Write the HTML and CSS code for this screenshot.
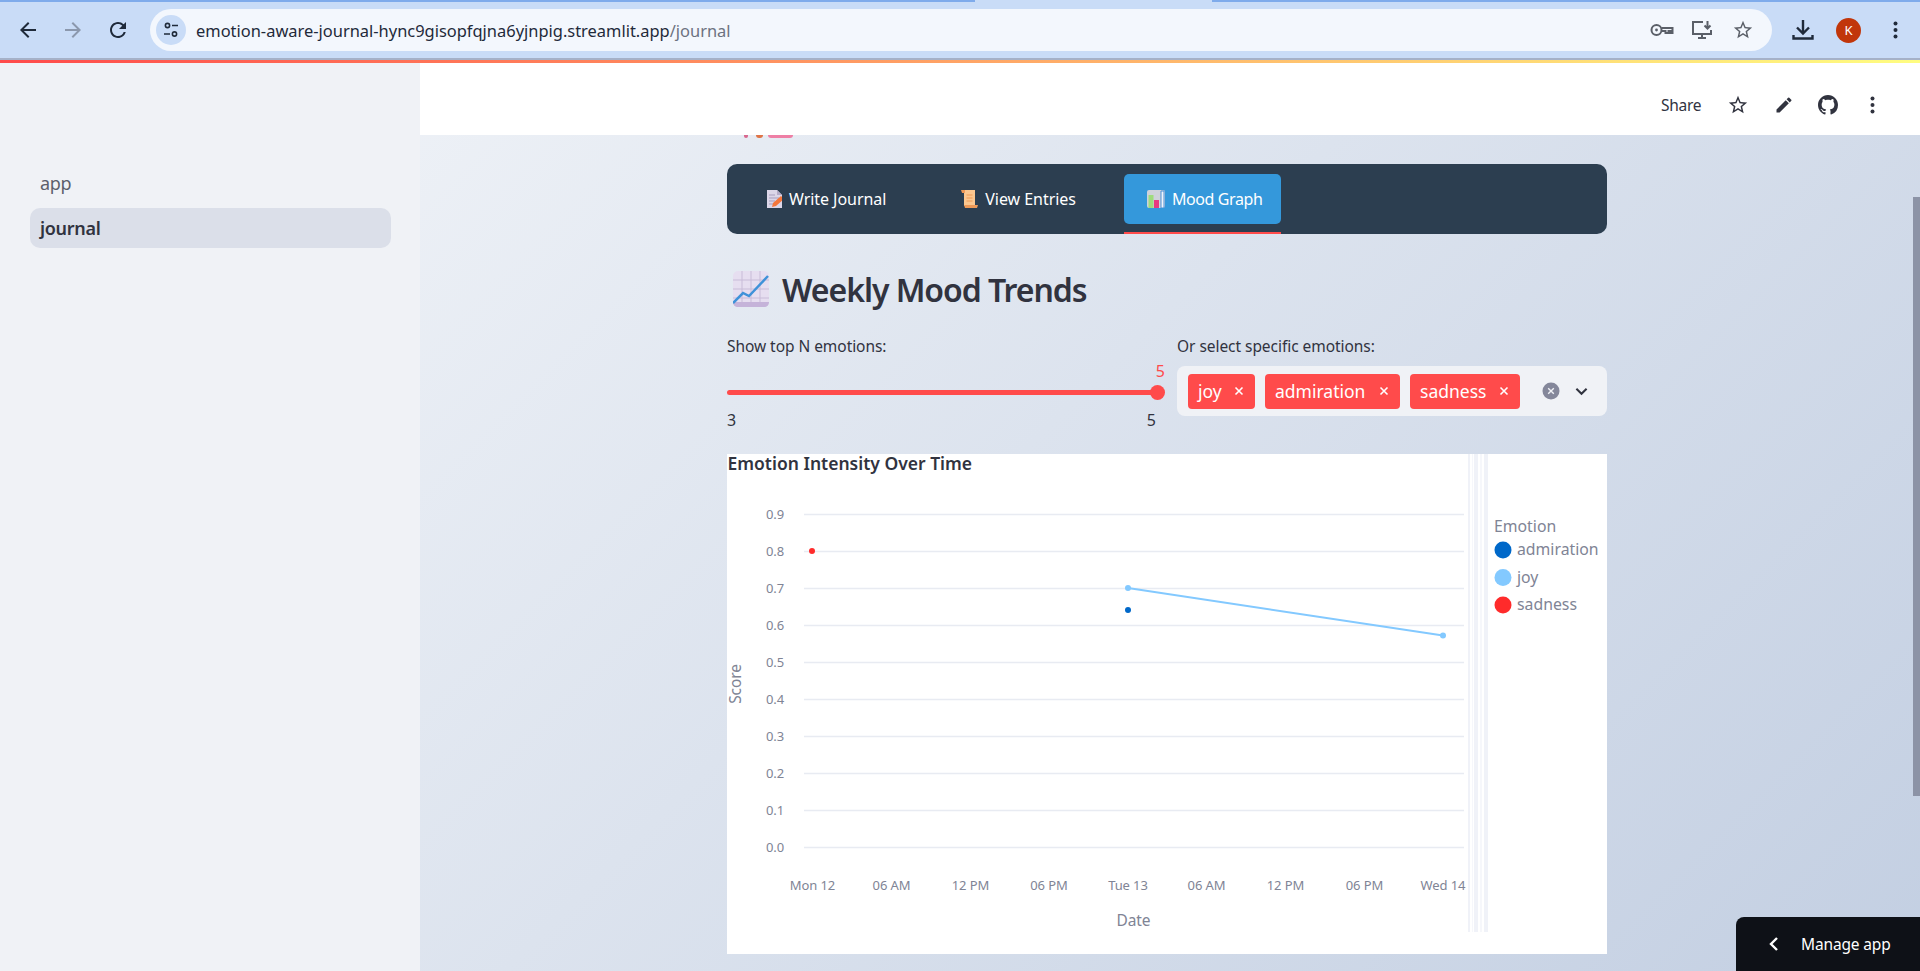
FILE: index.html
```html
<!DOCTYPE html>
<html lang="en">
<head>
    <meta charset="UTF-8">
    <title>journal</title>
    <link rel="stylesheet" href="styles.css">
</head>
<body>

    <!-- Browser toolbar -->
    <div class="chrome">
        <div class="tabEdge"><span class="edgeLeft"></span><span class="edgeGap"></span><span class="edgeRight"></span></div>
        <div class="toolbar">
            <svg class="navIcon" viewBox="0 0 24 24"><path d="M20 11H7.83l5.59-5.59L12 4l-8 8 8 8 1.41-1.41L7.83 13H20v-2z"/></svg>
            <svg class="navIcon navOff" viewBox="0 0 24 24"><path d="M12 4l-1.41 1.41L16.17 11H4v2h12.17l-5.58 5.59L12 20l8-8z"/></svg>
            <svg class="navIcon" viewBox="0 0 24 24"><path d="M17.65 6.35A7.958 7.958 0 0 0 12 4c-4.42 0-7.99 3.58-7.99 8s3.57 8 7.99 8c3.73 0 6.84-2.55 7.73-6h-2.08A5.99 5.99 0 0 1 12 18c-3.31 0-6-2.69-6-6s2.69-6 6-6c1.66 0 3.14.69 4.22 1.78L13 11h7V4l-2.35 2.35z"/></svg>
            <div class="urlPill">
                <span class="siteBadge">
                    <svg viewBox="0 0 16 16" class="tuneIcon"><circle cx="4.5" cy="3.5" r="2.1"/><path d="M9 3.5h6M1 12h6"/><circle cx="11.5" cy="12" r="2.1"/></svg>
                </span>
                <span class="url">emotion-aware-journal-hync9gisopfqjna6yjnpig.streamlit.app<span class="urlPath">/journal</span></span>
                <svg class="pillIcon keyIcon" viewBox="0 0 24 14"><circle cx="6.5" cy="7" r="5"/><circle cx="6.5" cy="7" r="1.4" class="solid"/><path d="M11.5 5h11v5h-2v-2h-2v2h-3V8h-4"/></svg>
                <svg class="pillIcon screenIcon" viewBox="0 0 22 22"><path d="M12 3H2v12h18v-4M7 19h8M11 15v4"/><path d="M16.5 2v7M13.5 6.5l3 3 3-3"/></svg>
                <svg class="pillIcon starIcon" viewBox="0 0 24 24"><path d="M22 9.24l-7.19-.62L12 2 9.19 8.63 2 9.24l5.46 4.73L5.82 21 12 17.27 18.18 21l-1.63-7.03L22 9.24zM12 15.4l-3.76 2.27 1-4.28-3.32-2.88 4.38-.38L12 6.1l1.71 4.04 4.38.38-3.32 2.88 1 4.28L12 15.4z"/></svg>
            </div>
            <svg class="downloadIcon" viewBox="0 0 22 22"><path d="M11 1v13M5 8.5l6 6 6-6M1.500 16v3.500h19V16"/></svg>
            <span class="avatar">K</span>
            <svg class="chromeKebab" viewBox="0 0 4 18"><circle cx="2" cy="2.500" r="2"/><circle cx="2" cy="9" r="2"/><circle cx="2" cy="15.500" r="2"/></svg>
        </div>
    </div>

    <div class="app">
        <div class="decoration"></div>

        <!-- Sidebar -->
        <nav class="sidebar">
            <a class="navLink">app</a>
            <a class="navLink navActive">journal</a>
        </nav>

        <div class="main">
            <!-- Header -->
            <header class="header">
                <span class="share">Share</span>
                <svg class="headIcon starHead" viewBox="0 0 24 24"><path d="M22 9.24l-7.19-.62L12 2 9.19 8.63 2 9.24l5.46 4.73L5.82 21 12 17.27 18.18 21l-1.63-7.03L22 9.24zM12 15.4l-3.76 2.27 1-4.28-3.32-2.88 4.38-.38L12 6.1l1.71 4.04 4.38.38-3.32 2.88 1 4.28L12 15.4z"/></svg>
                <svg class="headIcon penHead" viewBox="0 0 24 24"><path d="M3 17.25V21h3.75L17.81 9.94l-3.75-3.75L3 17.25zM20.71 7.04a1 1 0 0 0 0-1.41l-2.34-2.34a1 1 0 0 0-1.41 0l-1.83 1.83 3.75 3.75 1.83-1.83z"/></svg>
                <svg class="headIcon gitHead" viewBox="0 0 16 16"><path d="M8 0C3.58 0 0 3.58 0 8c0 3.54 2.29 6.53 5.47 7.59.4.07.55-.17.55-.38 0-.19-.01-.82-.01-1.49-2.01.37-2.53-.49-2.69-.94-.09-.23-.48-.94-.82-1.13-.28-.15-.68-.52-.01-.53.63-.01 1.08.58 1.23.82.72 1.21 1.87.87 2.33.66.07-.52.28-.87.51-1.07-1.78-.2-3.64-.89-3.64-3.95 0-.87.31-1.59.82-2.15-.08-.2-.36-1.02.08-2.12 0 0 .67-.21 2.2.82.64-.18 1.32-.27 2-.27.68 0 1.36.09 2 .27 1.53-1.04 2.2-.82 2.2-.82.44 1.1.16 1.92.08 2.12.51.56.82 1.27.82 2.15 0 3.07-1.87 3.75-3.65 3.95.29.25.54.73.54 1.48 0 1.07-.01 1.93-.01 2.2 0 .21.15.46.55.38A8.013 8.013 0 0 0 16 8c0-4.42-3.58-8-8-8z"/></svg>
                <svg class="headKebab" viewBox="0 0 4 18"><circle cx="2" cy="2.500" r="2"/><circle cx="2" cy="9" r="2"/><circle cx="2" cy="15.500" r="2"/></svg>
            </header>

            <div class="content">
                <!-- Bottom edge of the title emoji, scrolled under the header -->
                <div class="titleSliver"><span class="sliverA"></span><span class="sliverB"></span><span class="sliverC"></span></div>

                <!-- Tabs -->
                <div class="tabBar">
                    <div class="tab tabWrite">
                        <svg class="tabIcon" viewBox="0 0 15 18"><path class="pageFill" d="M0 0h10l5 5v13H0z"/><path class="pageFold" d="M10 0l5 5h-5z"/><path class="pageLine" d="M2 5h6M2 8h10M2 11h6M2 14h4"/><path class="pencil" d="M5 17l1-4 8-7 3 3-8 7z"/></svg>
                        <span>Write Journal</span>
                    </div>
                    <div class="tab tabView">
                        <svg class="tabIcon scrollIcon" viewBox="0 0 17 18"><path class="scrollFill" d="M3 0h11v16H3z"/><path class="scrollEnd" d="M0 0h4v3H1zM3 15h14l-1 3H4z"/><path class="scrollLine" d="M5.500 5h6M5.500 8h6M5.500 11h6"/></svg>
                        <span>View Entries</span>
                    </div>
                    <div class="tab tabMood">
                        <svg class="tabIcon chartIcon" viewBox="0 0 18 18"><rect class="boardFill" width="18" height="18" rx="2"/><rect class="barGreen" x="1.500" y="5" width="5" height="13"/><rect class="barPink" x="7" y="10" width="5" height="8"/><path class="barBlue" d="M14 1h3v17h-3z"/></svg>
                        <span>Mood Graph</span>
                    </div>
                </div>

                <h2 class="title">
                    <svg class="titleIcon" viewBox="0 0 36 36">
                        <rect class="gridFill" width="36" height="36" rx="5"/>
                        <path class="gridLine" d="M9 0v36M18 0v36M27 0v36M0 9h36M0 18h36M0 27h36"/>
                        <path class="gridBase" d="M0 31c0 3 2 5 5 5h26c3 0 5-2 5-5z"/>
                        <path class="gridTrend" d="M0 32l10-10 6 3L35 5"/>
                    </svg>
                    Weekly Mood Trends
                </h2>

                <!-- Filters -->
                <div class="controls">
                    <div class="control">
                        <label class="fieldLabel">Show top N emotions:</label>
                        <div class="slider">
                            <span class="sliderValue">5</span>
                            <div class="track"><span class="thumb"></span></div>
                            <div class="ticks"><span>3</span><span>5</span></div>
                        </div>
                    </div>
                    <div class="control">
                        <label class="fieldLabel">Or select specific emotions:</label>
                        <div class="multi">
                            <span class="tag tagJoy">joy <svg class="tagX" viewBox="0 0 10 10"><path d="M1.500 1.500l7 7M8.500 1.500l-7 7"/></svg></span>
                            <span class="tag tagAdm">admiration <svg class="tagX" viewBox="0 0 10 10"><path d="M1.500 1.500l7 7M8.500 1.500l-7 7"/></svg></span>
                            <span class="tag tagSad">sadness <svg class="tagX" viewBox="0 0 10 10"><path d="M1.500 1.500l7 7M8.500 1.500l-7 7"/></svg></span>
                            <svg class="clearAll" viewBox="0 0 18 18"><circle cx="9" cy="9" r="8.500"/><path d="M6.200 6.200l5.600 5.600M11.800 6.200l-5.600 5.600"/></svg>
                            <svg class="chevron" viewBox="0 0 14 9"><path d="M1.500 1.500L7 7l5.500-5.500"/></svg>
                        </div>
                    </div>
                </div>

                <!-- Chart -->
                <div class="chartCard">
                    <svg class="chart" viewBox="727 454 880 500">
                        <text x="727.500" y="470" class="chartTitle">Emotion Intensity Over Time</text>

                        <g class="stripes">
                            <rect x="1468" y="454" width="2" height="478"/>
                            <rect x="1472" y="454" width="1" height="478" class="stripeSoft"/>
                            <rect x="1474" y="454" width="4" height="478"/>
                            <rect x="1480" y="454" width="2" height="478" class="stripeSoft"/>
                            <rect x="1484" y="454" width="4" height="478"/>
                        </g>

                        <g class="gridY">
                            <path d="M804 514.500H1464M804 551.500H1464M804 588.500H1464M804 625.500H1464M804 662.500H1464M804 699.500H1464M804 736.500H1464M804 773.500H1464M804 810.500H1464M804 847.500H1464"/>
                        </g>

                        <g class="axisY">
                            <text x="784" y="519">0.9</text>
                            <text x="784" y="556">0.8</text>
                            <text x="784" y="593">0.7</text>
                            <text x="784" y="630">0.6</text>
                            <text x="784" y="667">0.5</text>
                            <text x="784" y="704">0.4</text>
                            <text x="784" y="741">0.3</text>
                            <text x="784" y="778">0.2</text>
                            <text x="784" y="815">0.1</text>
                            <text x="784" y="852">0.0</text>
                        </g>

                        <g class="axisX">
                            <text x="812.500" y="890">Mon 12</text>
                            <text x="891.500" y="890">06 AM</text>
                            <text x="970.500" y="890">12 PM</text>
                            <text x="1049" y="890">06 PM</text>
                            <text x="1128" y="890">Tue 13</text>
                            <text x="1206.500" y="890">06 AM</text>
                            <text x="1285.500" y="890">12 PM</text>
                            <text x="1364.500" y="890">06 PM</text>
                            <text x="1443" y="890">Wed 14</text>
                        </g>

                        <text x="1133.500" y="926" class="axisName">Date</text>
                        <text transform="translate(741 684) rotate(-90)" class="axisName">Score</text>

                        <path class="joyLine" d="M1128 588L1443 635.500"/>
                        <circle class="dotJoy" cx="1128" cy="588" r="3"/>
                        <circle class="dotJoy" cx="1443" cy="635.500" r="3"/>
                        <circle class="dotAdm" cx="1128" cy="610" r="3"/>
                        <circle class="dotSad" cx="812" cy="551" r="3"/>

                        <text x="1494" y="532" class="legendName">Emotion</text>
                        <circle class="dotAdm" cx="1503" cy="550" r="8.500"/>
                        <text x="1517" y="555" class="legendName">admiration</text>
                        <circle class="dotJoy" cx="1503" cy="577.500" r="8.500"/>
                        <text x="1517" y="583" class="legendName">joy</text>
                        <circle class="dotSad" cx="1503" cy="605" r="8.500"/>
                        <text x="1517" y="610" class="legendName">sadness</text>
                    </svg>
                </div>
            </div>
        </div>

        <span class="scrollThumb"></span>

        <div class="manageApp">
            <svg class="manageChevron" viewBox="0 0 10 16"><path d="M8 2L2 8l6 6"/></svg>
            Manage app
        </div>
    </div>

</body>
</html>
```

FILE: styles.css
```css
* {
    margin: 0;
    padding: 0;
    box-sizing: border-box;
}

html, body {
    height: 100%;
    overflow: hidden;
}

body {
    font-family: "Noto Sans", sans-serif;
    color: #31333f;
}

/* Browser toolbar */
.chrome {
    height: 60px;
    background-color: #c9dcf7;
    border-bottom: 2px solid #a5b1c8;
}

.tabEdge {
    display: flex;
    height: 2px;
}

.edgeLeft {
    width: 975px;
    background-color: #7fabeb;
}

.edgeGap {
    width: 237px;
}

.edgeRight {
    flex: 1;
    background-color: #7fabeb;
}

.toolbar {
    display: flex;
    align-items: center;
    height: 56px;
    padding-left: 16px;
}

.navIcon {
    width: 24px;
    height: 24px;
    margin-right: 21px;
    fill: #1f2a3a;
}

.navOff {
    fill: #8b98ad;
}

.urlPill {
    display: flex;
    align-items: center;
    width: 1622px;
    height: 42px;
    margin-left: -1px;
    padding-left: 6px;
    background-color: #f3f7fd;
    border-radius: 21px;
}

.siteBadge {
    display: flex;
    align-items: center;
    justify-content: center;
    width: 30px;
    height: 30px;
    border-radius: 50%;
    background-color: #c9dcf7;
}

.tuneIcon {
    width: 16px;
    height: 16px;
    fill: none;
    stroke: #1f2a3a;
    stroke-width: 1.6;
}

.url {
    flex: 1;
    margin-left: 10px;
    font-size: 16.450px;
    color: #1f2a3a;
}

.urlPath {
    color: #6c7280;
}

.pillIcon {
    fill: none;
    stroke: #5a5f68;
    stroke-width: 2;
}

.keyIcon {
    width: 24px;
    height: 14px;
    margin-right: 17px;
}

.keyIcon .solid {
    fill: #5a5f68;
    stroke: none;
}

.screenIcon {
    width: 22px;
    height: 22px;
    margin-right: 19px;
}

.starIcon {
    width: 22px;
    height: 22px;
    margin-right: 18px;
    fill: #5a5f68;
    stroke: none;
}

.downloadIcon {
    width: 22px;
    height: 22px;
    margin-left: 20px;
    fill: none;
    stroke: #1f2a3a;
    stroke-width: 2.400;
}

.avatar {
    display: flex;
    align-items: center;
    justify-content: center;
    width: 25px;
    height: 25px;
    margin-left: 22px;
    border-radius: 50%;
    background-color: #c1360a;
    color: #fff;
    font-size: 13px;
}

.chromeKebab {
    width: 5px;
    height: 18px;
    margin-left: 32px;
    fill: #1f2a3a;
}

/* App */
.app {
    position: relative;
    display: flex;
    height: 911px;
    background: linear-gradient(135deg, #f5f7fa 0%, #c3cfe2 100%);
    overflow: hidden;
}

.decoration {
    position: absolute;
    top: 0;
    left: 0;
    right: 0;
    height: 3px;
    background-image: linear-gradient(90deg, #ff4b4b, #fffd80);
}

.sidebar {
    width: 420px;
    flex-shrink: 0;
    padding: 103px 29px 0 30px;
    background-color: #f0f2f6;
}

.navLink {
    display: flex;
    align-items: center;
    height: 40px;
    margin-bottom: 5px;
    padding-left: 10px;
    border-radius: 10px;
    font-size: 18px;
    letter-spacing: -0.3px;
    color: #5c5f6c;
}

.navActive {
    background-color: #dbdfe9;
    font-weight: 600;
    color: #31333f;
}

.main {
    flex: 1;
    min-width: 0;
}

.header {
    display: flex;
    align-items: center;
    height: 75px;
    padding-top: 15px;
    padding-left: 1241px;
    background-color: #fff;
}

.share {
    width: 41px;
    font-size: 15.500px;
    letter-spacing: -0.3px;
    color: #31333f;
}

.headIcon {
    fill: #31333f;
}

.starHead {
    width: 22px;
    height: 22px;
    margin-left: 25px;
}

.penHead {
    width: 20px;
    height: 20px;
    margin-left: 25px;
}

.gitHead {
    width: 20px;
    height: 20px;
    margin-left: 24px;
}

.headKebab {
    width: 5px;
    height: 18px;
    margin-left: 32px;
    fill: #31333f;
}

.content {
    width: 880px;
    margin-left: 307px;
}

.titleSliver {
    display: flex;
    height: 3px;
}

.titleSliver span {
    height: 3px;
    border-radius: 0 0 4px 4px;
}

.sliverA {
    width: 4px;
    margin-left: 17px;
    background-color: #d8688e;
}

.sliverB {
    width: 7px;
    margin-left: 8px;
    background-color: #df7447;
}

.sliverC {
    width: 25px;
    margin-left: 5px;
    background-color: #ee7fa5;
}

/* Tabs */
.tabBar {
    display: flex;
    height: 70px;
    margin-top: 26px;
    background-color: #2c3e50;
    border-radius: 10px;
    color: #fff;
    font-size: 16px;
    letter-spacing: -0.05px;
}

.tab {
    display: flex;
    align-items: center;
    gap: 7px;
    height: 50px;
    margin-top: 10px;
}

.tabWrite {
    margin-left: 40px;
}

.tabView {
    margin-left: 75px;
}

.tabMood {
    position: relative;
    width: 157px;
    margin-left: 48px;
    padding-left: 23px;
    background-color: #3498db;
    border-radius: 5px;
    letter-spacing: -0.4px;
}

.tabMood::after {
    content: "";
    position: absolute;
    left: 0;
    right: 0;
    top: 58px;
    height: 2px;
    background-color: #ff4b4b;
}

.tabIcon {
    width: 15px;
    height: 18px;
}

.scrollIcon {
    width: 17px;
}

.chartIcon {
    width: 18px;
}

.pageFill { fill: #dcd6e8; }
.pageFold { fill: #b5acc8; }
.pageLine { stroke: #a79dbd; stroke-width: 1; fill: none; }
.pencil { fill: #f4763b; }
.scrollFill { fill: #fcc78f; }
.scrollEnd { fill: #ef9a58; }
.scrollLine { stroke: #f09a55; stroke-width: 1; fill: none; }
.boardFill { fill: #cfd2da; }
.barGreen { fill: #9fdc7c; }
.barPink { fill: #e83a80; }
.barBlue { fill: #f1f4fa; stroke: #4a8fd6; stroke-width: 1; }

.title {
    display: flex;
    align-items: center;
    gap: 13px;
    height: 36px;
    margin-top: 37px;
    padding-left: 6px;
    font-size: 32px;
    font-weight: 600;
    letter-spacing: -1.05px;
    color: #31333f;
}

.titleIcon {
    width: 36px;
    height: 36px;
}

.gridFill { fill: #e6def0; }
.gridLine { stroke: #c8bcd8; stroke-width: 1; fill: none; }
.gridBase { fill: #c5b3d9; }
.gridTrend { stroke: #3f92d9; stroke-width: 2.500; fill: none; }

/* Filters */
.controls {
    display: grid;
    grid-template-columns: 430px 430px;
    gap: 20px;
    margin-top: 30px;
}

.fieldLabel {
    display: block;
    height: 20px;
    font-size: 15.500px;
    letter-spacing: -0.05px;
    line-height: 18px;
}

.slider {
    padding-top: 6px;
}

.sliderValue {
    display: block;
    height: 20px;
    margin-right: -8px;
    text-align: right;
    font-size: 16px;
    line-height: 16px;
    color: #ff4b4b;
}

.track {
    position: relative;
    height: 5px;
    margin-top: 7px;
    background-color: #ff4b4b;
    border-radius: 3px;
}

.thumb {
    position: absolute;
    top: -5px;
    right: -8px;
    width: 15px;
    height: 15px;
    border-radius: 50%;
    background-color: #ff4b4b;
}

.ticks {
    display: flex;
    justify-content: space-between;
    margin-top: 16px;
    padding-right: 1px;
    font-size: 16px;
    line-height: 18px;
}

.multi {
    display: flex;
    align-items: center;
    height: 50px;
    margin-top: 9px;
    padding-left: 11px;
    background-color: #f0f2f6;
    border-radius: 8px;
}

.tag {
    display: flex;
    align-items: center;
    justify-content: space-between;
    height: 35px;
    margin-right: 10px;
    padding: 0 11px 0 10px;
    background-color: #ff4b4b;
    border-radius: 4px;
    color: #fff;
    font-size: 17.500px;
    white-space: nowrap;
}

.tagJoy { width: 67px; }
.tagAdm { width: 135px; }
.tagSad { width: 110px; }

.tagX {
    width: 10px;
    height: 10px;
    fill: none;
    stroke: #fff;
    stroke-width: 1.600;
}

.clearAll {
    width: 18px;
    height: 18px;
    margin-left: 12px;
    fill: #84879a;
}

.clearAll path {
    fill: none;
    stroke: #f0f2f6;
    stroke-width: 1.400;
}

.chevron {
    width: 13px;
    height: 9px;
    margin-left: 15px;
    fill: none;
    stroke: #31333f;
    stroke-width: 2.200;
}

/* Chart */
.chartCard {
    height: 500px;
    margin-top: 25px;
    background-color: #fff;
}

.chart {
    display: block;
    width: 880px;
    height: 500px;
    overflow: visible;
    font-family: "Noto Sans", sans-serif;
}

.chartTitle {
    font-size: 17.500px;
    font-weight: 600;
    fill: #31333f;
}

.stripes { fill: #f0f2f8; }
.stripes .stripeSoft { fill: #f6f7fb; }

.gridY path {
    fill: none;
    stroke: #e8ebf2;
    stroke-width: 1.500;
}

.axisY text, .axisX text {
    font-size: 13px;
    letter-spacing: -0.1px;
    fill: #808495;
}

.axisY text { text-anchor: end; }
.axisX text { text-anchor: middle; }

.axisName {
    font-size: 15.500px;
    letter-spacing: -0.1px;
    text-anchor: middle;
    fill: #808495;
}

.legendName {
    font-size: 15.800px;
    fill: #808495;
}

.joyLine {
    fill: none;
    stroke: #83c9ff;
    stroke-width: 2;
}

.dotJoy { fill: #83c9ff; }
.dotAdm { fill: #0068c9; }
.dotSad { fill: #ff2b2b; }

.scrollThumb {
    position: absolute;
    top: 137px;
    right: 0;
    width: 7px;
    height: 599px;
    background-color: #8c93a6;
}

.manageApp {
    position: absolute;
    right: 0;
    bottom: 0;
    display: flex;
    align-items: center;
    width: 184px;
    height: 54px;
    padding-left: 33px;
    background-color: #0e1117;
    border-top-left-radius: 8px;
    color: #fff;
    font-size: 15.500px;
    letter-spacing: -0.15px;
}

.manageChevron {
    width: 10px;
    height: 16px;
    margin-right: 22px;
    fill: none;
    stroke: #fff;
    stroke-width: 2.400;
}
```
